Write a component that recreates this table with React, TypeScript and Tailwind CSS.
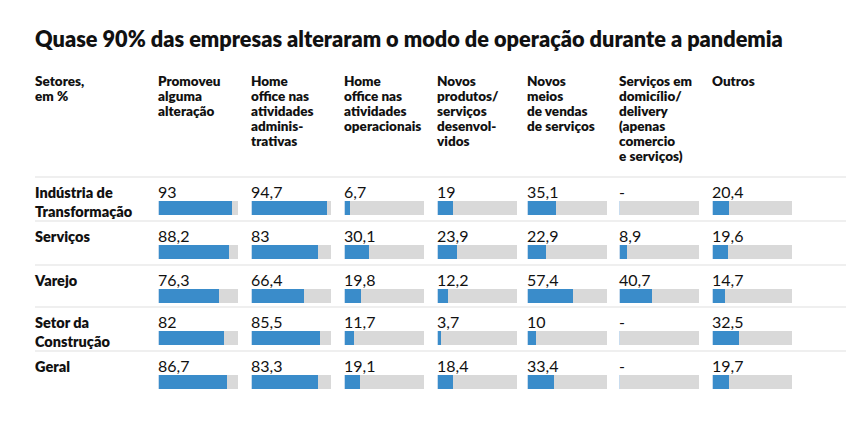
const columns = [
  "Promoveu\nalguma\nalteração",
  "Home\noffice nas\natividades\nadminis-\ntrativas",
  "Home\noffice nas\natividades\noperacionais",
  "Novos\nprodutos/\nserviços\ndesenvol-\nvidos",
  "Novos\nmeios\nde vendas\nde serviços",
  "Serviços em\ndomicílio/\ndelivery\n(apenas\ncomercio\ne serviços)",
  "Outros",
];

const rows: { label: string; values: (number | null)[]; h: string }[] = [
  { label: "Indústria de\nTransformação", values: [93, 94.7, 6.7, 19, 35.1, null, 20.4], h: "h-[44px]" },
  { label: "Serviços", values: [88.2, 83, 30.1, 23.9, 22.9, 8.9, 19.6], h: "h-[44px]" },
  { label: "Varejo", values: [76.3, 66.4, 19.8, 12.2, 57.4, 40.7, 14.7], h: "h-[42px]" },
  { label: "Setor da\nConstrução", values: [82, 85.5, 11.7, 3.7, 10, null, 32.5], h: "h-[44px]" },
  { label: "Geral", values: [86.7, 83.3, 19.1, 18.4, 33.4, null, 19.7], h: "h-[44px]" },
];

const grid = "grid grid-cols-[123px_93px_93px_93px_90px_92px_93px_104px]";

function fmt(v: number | null) {
  if (v === null) return "-";
  return String(v).replace(".", ",");
}

function Bar({ value }: { value: number | null }) {
  return (
    <div className="w-[80px] h-[14px] bg-[#d9d9d9] border-l border-[#c9dcee]">
      <div className="h-full bg-[#3a8cca]" style={{ width: `${value ?? 0}%` }} />
    </div>
  );
}

export default function App() {
  return (
    <div className="w-[846px] h-[428px] bg-white text-[#111] font-['Lato',sans-serif] pl-[35px] pt-[25px]">
      <h1 className="text-[21.7px] font-extrabold leading-[28px]">
        Quase 90% das empresas alteraram o modo de operação durante a pandemia
      </h1>

      <div className={`${grid} mt-[21px] pb-[12px] text-[13.5px] font-extrabold leading-[15px]`}>
        <div className="whitespace-pre-line">{"Setores,\nem %"}</div>
        {columns.map((c, i) => (
          <div key={i} className="whitespace-pre-line">{c}</div>
        ))}
      </div>

      {rows.map((r, ri) => (
        <div key={ri} className={`${grid} ${r.h} border-t-2 border-[#efefef] pt-[5px]`}>
          <div className="whitespace-pre-line text-[14.5px] font-extrabold leading-[19px]">{r.label}</div>
          {r.values.map((v, i) => (
            <div key={i} className="flex flex-col">
              <div className="text-[16px] leading-[18px] h-[18px]">{fmt(v)}</div>
              <Bar value={v} />
            </div>
          ))}
        </div>
      ))}
    </div>
  );
}
